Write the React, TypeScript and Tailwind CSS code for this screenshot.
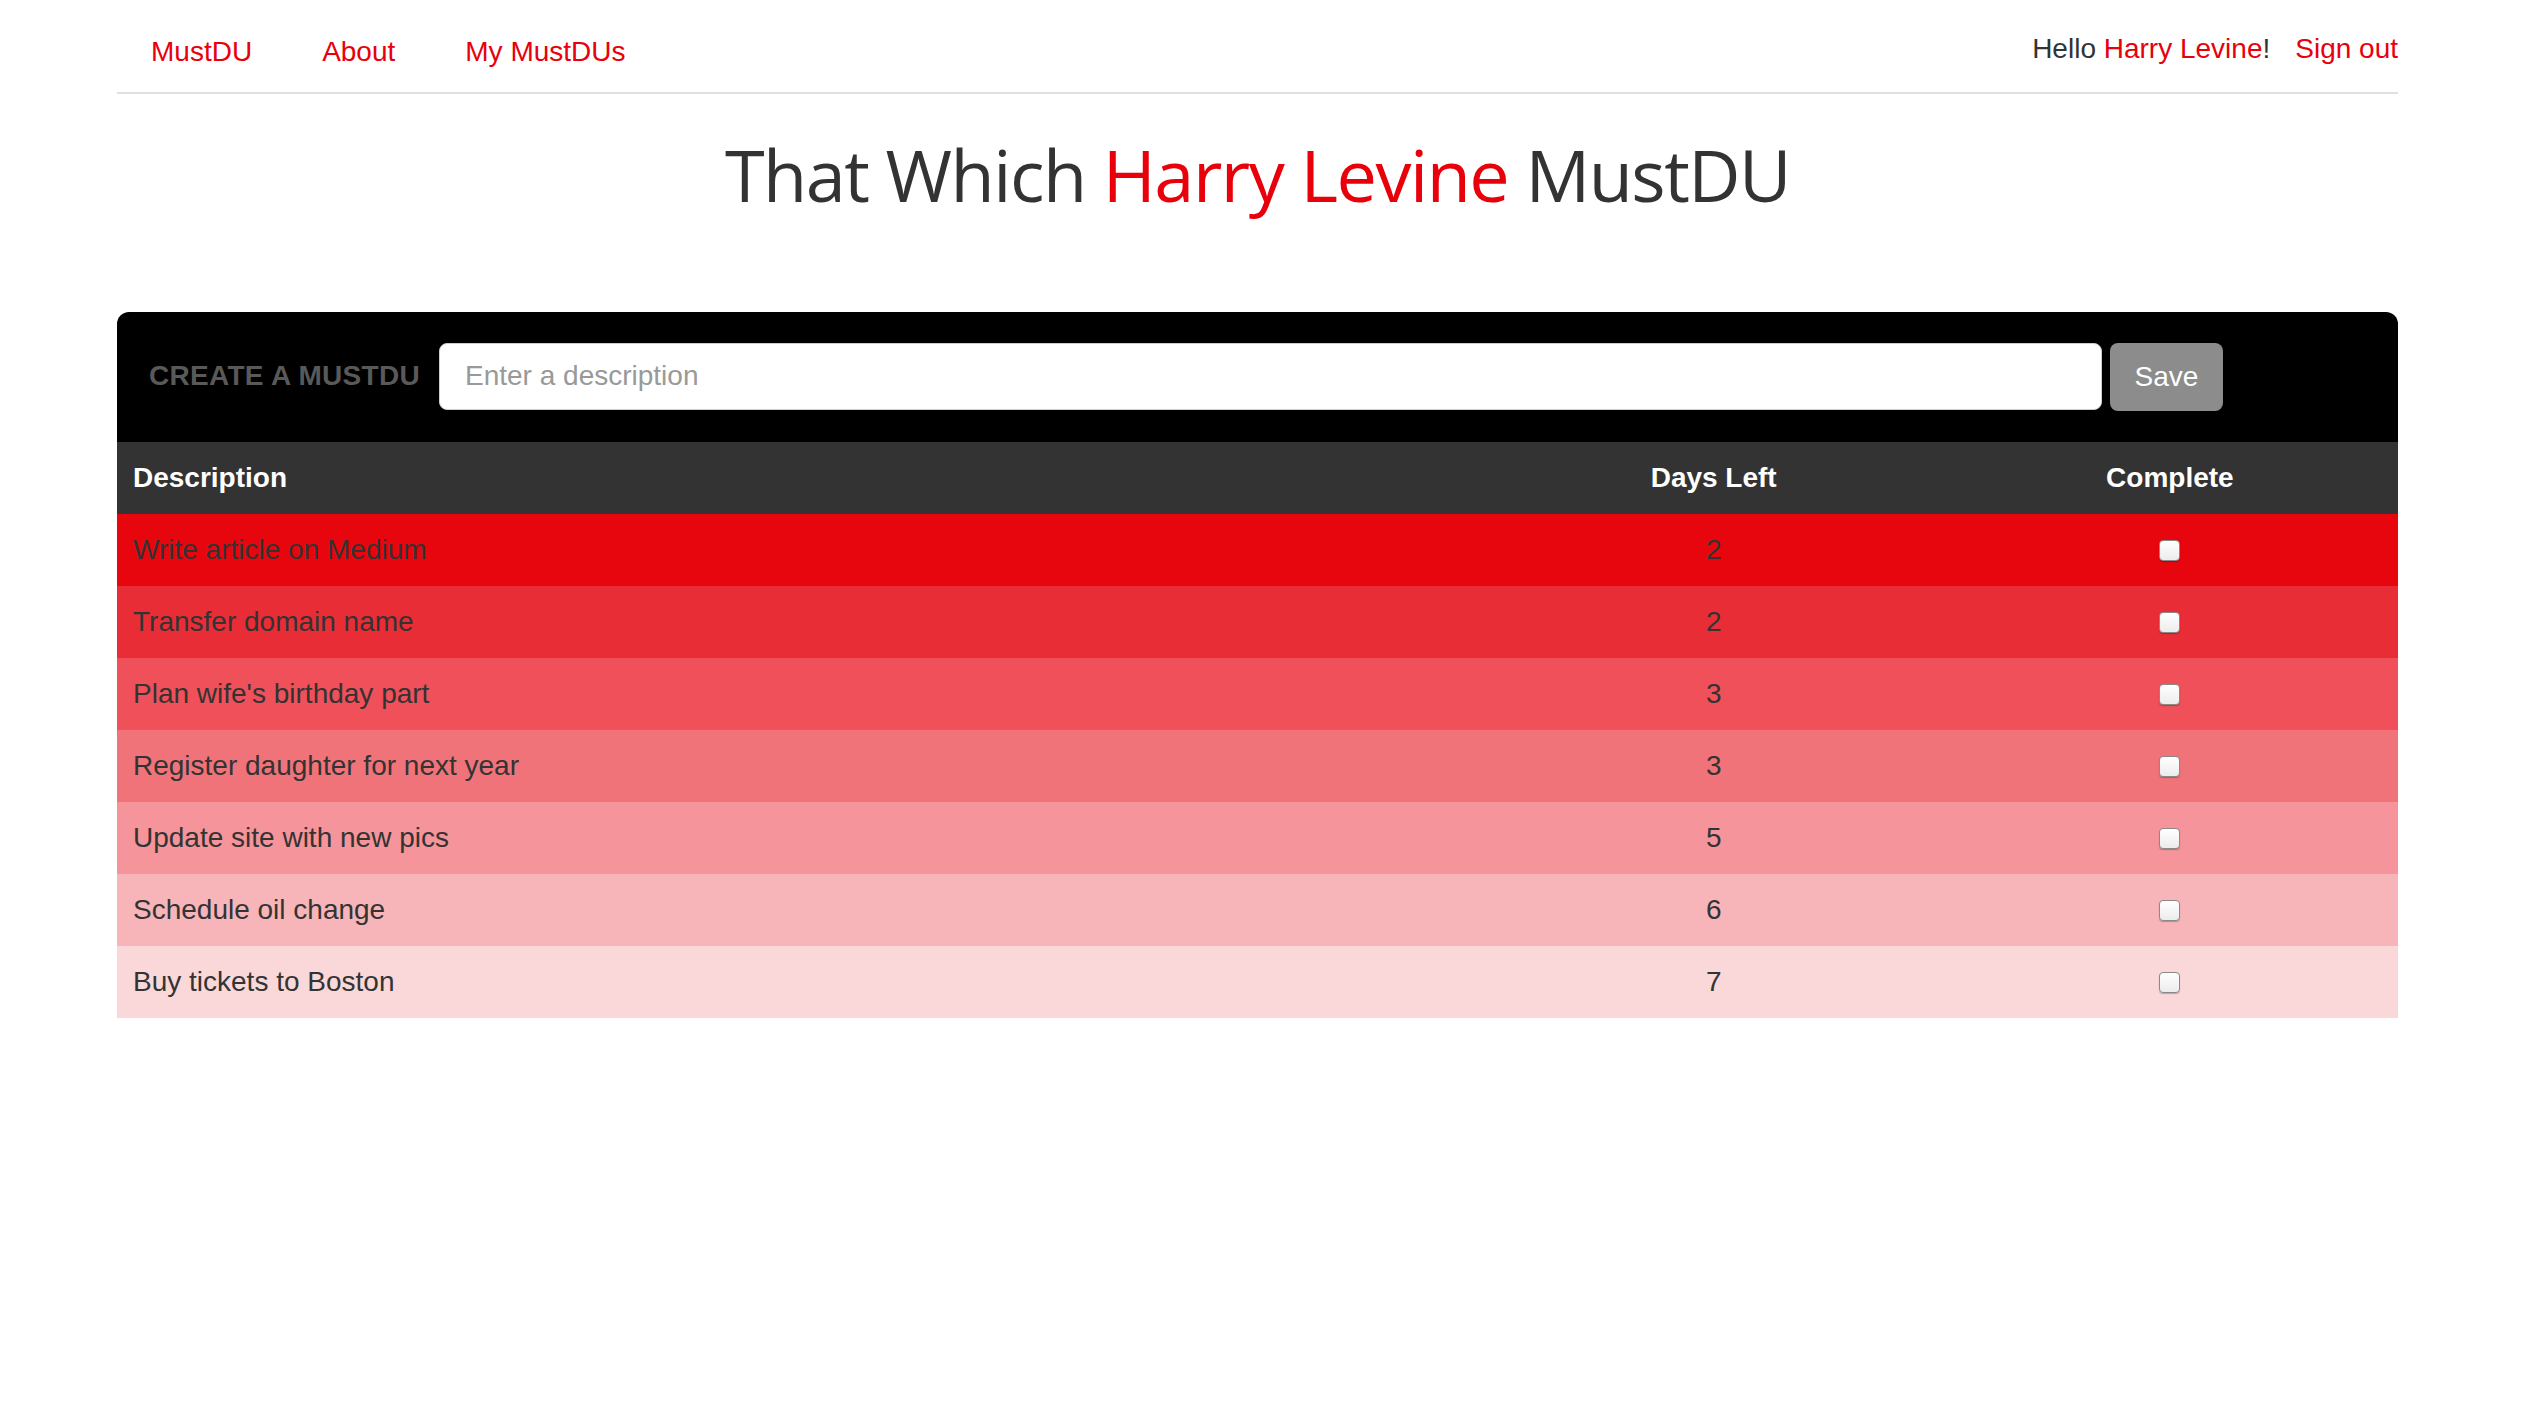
import React from "react";

const rows = [
  { d: "Write article on Medium", n: 2, bg: "bg-[#e8060e]" },
  { d: "Transfer domain name", n: 2, bg: "bg-[#e92d36]" },
  { d: "Plan wife's birthday part", n: 3, bg: "bg-[#ef505a]" },
  { d: "Register daughter for next year", n: 3, bg: "bg-[#f1737a]" },
  { d: "Update site with new pics", n: 5, bg: "bg-[#f5949a]" },
  { d: "Schedule oil change", n: 6, bg: "bg-[#f7b5b9]" },
  { d: "Buy tickets to Boston", n: 7, bg: "bg-[#fad8da]" },
];

function Checkbox() {
  return (
    <div className="w-[21px] h-[21px] rounded-[4px] border border-[#8a8a8a] bg-gradient-to-b from-white to-[#ececec] shadow-[0_1px_1px_rgba(0,0,0,0.25)]" />
  );
}

export default function App() {
  return (
    <div className="min-h-[1412px] bg-white font-['Liberation_Sans',Arial,sans-serif] text-[#333]">
      <div className="ml-[117px] w-[2281px]">
        {/* nav */}
        <div className="h-[94px] border-b-2 border-[#e0e0e0] flex justify-between">
          <div className="flex pt-[32px] text-[28px] leading-[40px] text-[#e8000b]">
            <span className="pl-[34px] pr-[35px]">MustDU</span>
            <span className="px-[35px]">About</span>
            <span className="px-[35px]">My MustDUs</span>
          </div>
          <div className="flex pt-[29px] text-[28px] leading-[40px]">
            <span>
              Hello <span className="text-[#e8000b]">Harry Levine</span>!
            </span>
            <span className="ml-[25px] text-[#e8000b]">Sign out</span>
          </div>
        </div>

        {/* title */}
        <h1 className="mt-[40px] text-center font-['Open_Sans',sans-serif] text-[72px] leading-[80px] tracking-[-1.5px] text-[#333]">
          That Which <span className="text-[#e8000b]">Harry Levine</span> MustDU
        </h1>

        {/* panel */}
        <div className="mt-[98px]">
          <div className="h-[130px] bg-black rounded-t-[12px] flex items-center pl-[32px]">
            <span className="text-[28px] font-bold text-[#595959] leading-none tracking-[0.3px] mt-[-2px]">
              CREATE A MUSTDU
            </span>
            <div className="ml-[19px] w-[1663px] h-[67px] bg-white rounded-[8px] border border-[#ccc] flex items-center pl-[25px] mt-[-2px]">
              <span className="text-[28px] text-[#999]">Enter a description</span>
            </div>
            <div className="ml-[8px] w-[113px] h-[68px] bg-[#8c8c8c] rounded-[8px] flex items-center justify-center text-white text-[28px]">
              Save
            </div>
          </div>
          <div className="grid grid-cols-[60%_20%_20%] h-[72px] bg-[#333] text-white font-bold text-[28px] items-center">
            <span className="pl-[16px]">Description</span>
            <span className="text-center">Days Left</span>
            <span className="text-center">Complete</span>
          </div>
          {rows.map((r, i) => (
            <div key={i} className={`grid grid-cols-[60%_20%_20%] h-[72px] items-center text-[28px] text-[#333] ${r.bg}`}>
              <span className="pl-[16px]">{r.d}</span>
              <span className="text-center">{r.n}</span>
              <span className="flex justify-center">
                <Checkbox />
              </span>
            </div>
          ))}
        </div>
      </div>
    </div>
  );
}
